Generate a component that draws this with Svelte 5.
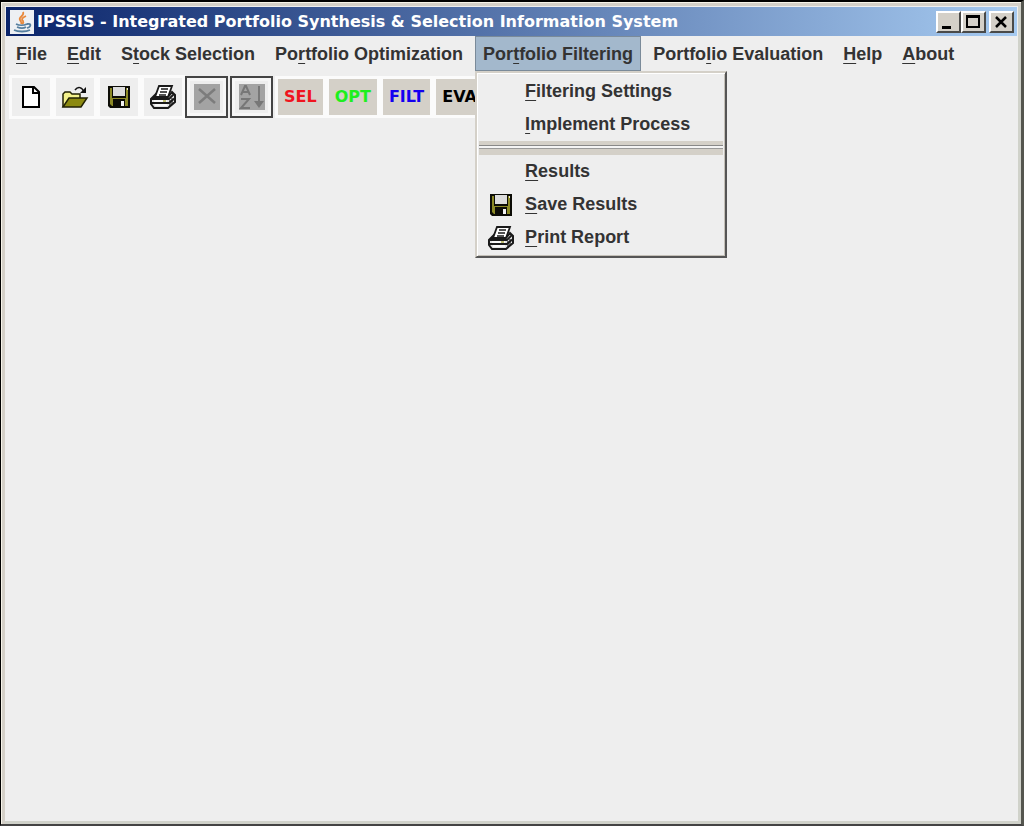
<script lang="ts">
  interface MenuItem {
    label: string;
    key: number; // index of the underlined letter
    icon?: 'save' | 'print';
    divider?: boolean;
  }

  interface Menu {
    label: string;
    key: number;
    items?: MenuItem[];
  }

  const title = 'IPSSIS - Integrated Portfolio Synthesis & Selection Information System';

  const menus: Menu[] = [
    { label: 'File', key: 0 },
    { label: 'Edit', key: 0 },
    { label: 'Stock Selection', key: 1 },
    { label: 'Portfolio Optimization', key: 2 },
    {
      label: 'Portfolio Filtering',
      key: 3,
      items: [
        { label: 'Filtering Settings', key: 0 },
        { label: 'Implement Process', key: 0 },
        { label: 'Results', key: 0, divider: true },
        { label: 'Save Results', key: 0, icon: 'save' },
        { label: 'Print Report', key: 0, icon: 'print' },
      ],
    },
    { label: 'Portfolio Evaluation', key: 6 },
    { label: 'Help', key: 0 },
    { label: 'About', key: 0 },
  ];

  const stages = [
    { label: 'SEL', name: 'red' },
    { label: 'OPT', name: 'green' },
    { label: 'FILT', name: 'blue' },
    { label: 'EVAL', name: 'black' },
  ];

  let openMenu = $state('Portfolio Filtering');

  function toggleMenu(label: string) {
    openMenu = openMenu === label ? '' : label;
  }
</script>

{#snippet mnemonic(label: string, key: number)}
  <span>{label.slice(0, key)}<u>{label[key]}</u>{label.slice(key + 1)}</span>
{/snippet}

{#snippet saveIcon()}
  <svg class="icon" viewBox="0 0 24 24" aria-hidden="true">
    <path d="M1 1h22v22H3l-2-2z" fill="#0c0c06" />
    <path d="M3 3h2v10h14V3h2v18H5l-2-2z" fill="#8c8a26" />
    <path d="M6 2h12v9H6z" fill="#dcdcdc" />
    <path d="M6 14h12v8H6z" fill="#0c0c06" />
    <path d="M14 16h3v5h-3z" fill="#f4f4f4" />
    <path d="M20 3h1v2h-1z" fill="#e8e8e8" />
  </svg>
{/snippet}

{#snippet printIcon()}
  <svg class="icon print" viewBox="0 0 28 24" aria-hidden="true">
    <path d="M10 1h13l-4 11H6z" fill="#fff" stroke="#1a1a1a" stroke-width="1.8" />
    <path d="M12 4h7M11 7h7M10 10h7" stroke="#1a1a1a" stroke-width="1.4" />
    <path d="M6 10l-4 4v5l3 4h14l7-6v-7l-3-3-4 5H6z" fill="#e4e4e4" stroke="#1a1a1a" stroke-width="2" />
    <path d="M3 14h17l5-5M3 18h17l6-5" fill="none" stroke="#1a1a1a" stroke-width="1.8" />
    <path d="M21 15v6M23 13v6" stroke="#1a1a1a" stroke-width="1.2" />
    <path d="M5 16h13M6 20h12" stroke="#fff" stroke-width="1.4" />
    <path d="M14 16h3" stroke="#a6a43c" stroke-width="1.4" />
  </svg>
{/snippet}

<main class="window">
  <header class="titlebar">
    <svg class="java" viewBox="0 0 24 24" aria-hidden="true">
      <path d="M0 0h24v24H0z" fill="#edf0f3" />
      <path d="M13 2c2 4-5 5-3 8 1 2 2 2 1 4M16 6c-4 2-5 3-3 5 1 2 0 2-1 3" fill="none" stroke="#e8893c" stroke-width="1.8" />
      <path d="M6 14c3 1.5 8 1.5 11 0M7 17c3 1.3 7 1.3 9 0M17 14c5-1 4 3 0 4M4 20c4 2 12 2 16 0" fill="none" stroke="#557f9f" stroke-width="1.8" />
    </svg>
    <h1>{title}</h1>
    <div class="controls">
      <button type="button" aria-label="Minimize">
        <svg viewBox="0 0 20 18"><path d="M4 13h9v3H4z" /></svg>
      </button>
      <button type="button" aria-label="Maximize">
        <svg viewBox="0 0 20 18"><path d="M3 2h14v13H3zM5 5v8h10V5z" fill-rule="evenodd" /></svg>
      </button>
      <button type="button" class="close" aria-label="Close">
        <svg viewBox="0 0 20 18"><path d="M5 4l10 10M15 4L5 14" fill="none" stroke="#000" stroke-width="2.5" /></svg>
      </button>
    </div>
  </header>

  <nav class="menubar">
    {#each menus as menu}
      <div class="menu">
        <button
          type="button"
          class="menu-title"
          class:open={openMenu === menu.label}
          aria-expanded={openMenu === menu.label}
          onclick={() => toggleMenu(menu.label)}
        >
          {@render mnemonic(menu.label, menu.key)}
        </button>
        {#if menu.items && openMenu === menu.label}
          <div class="popup">
            {#each menu.items as item}
              {#if item.divider}
                <div class="divider"></div>
              {/if}
              <button type="button" class="menu-item">
                <span class="slot">
                  {#if item.icon === 'save'}
                    {@render saveIcon()}
                  {:else if item.icon === 'print'}
                    {@render printIcon()}
                  {/if}
                </span>
                {@render mnemonic(item.label, item.key)}
              </button>
            {/each}
          </div>
        {/if}
      </div>
    {/each}
  </nav>

  <div class="toolbar">
    <button type="button" class="tool" aria-label="New">
      <svg class="icon" viewBox="0 0 24 24">
        <path d="M4 2h11l5 5v15H4z" fill="#fff" stroke="#000" stroke-width="2" />
        <path d="M14 2v6h6" fill="none" stroke="#000" stroke-width="2" />
      </svg>
    </button>
    <button type="button" class="tool" aria-label="Open">
      <svg class="icon wide" viewBox="0 0 28 24">
        <path d="M2 22V9l2-2h5l2 2h8v4" fill="#f4f28c" stroke="#222204" stroke-width="1.5" />
        <path d="M2 22l6-9h18l-6 9z" fill="#8c8a10" stroke="#222204" stroke-width="1.5" />
        <path d="M14 5c3-4 7-3 9 2" fill="none" stroke="#111" stroke-width="1.5" />
        <path d="M25 2v6h-6z" fill="#111" />
      </svg>
    </button>
    <button type="button" class="tool" aria-label="Save">{@render saveIcon()}</button>
    <button type="button" class="tool" aria-label="Print">{@render printIcon()}</button>
    <button type="button" class="tool off" aria-label="Delete" disabled>
      <svg class="glyph" viewBox="0 0 26 26">
        <path d="M0 0h26v26H0z" fill="#a3a3a3" />
        <path d="M5 5l16 14M21 5L5 19" stroke="#7c7c7c" stroke-width="2.5" />
      </svg>
    </button>
    <button type="button" class="tool off" aria-label="Sort" disabled>
      <svg class="glyph" viewBox="0 0 26 26">
        <path d="M0 0h26v26H0z" fill="#a3a3a3" />
        <path d="M2 11l4-9h1l4 9M4 8h6M2 15h8L2 24h9" fill="none" stroke="#777" stroke-width="2" />
        <path d="M20 2v20" stroke="#777" stroke-width="2" />
        <path d="M15 17h10l-5 7z" fill="#777" />
      </svg>
    </button>
    {#each stages as stage}
      <button type="button" class="stage {stage.name}">{stage.label}</button>
    {/each}
  </div>
</main>

<style>
  :global(body) {
    margin: 0;
    background: #000;
  }

  .window {
    box-sizing: border-box;
    min-height: 100vh;
    padding: 4px 4px 3px 4px;
    border-style: solid;
    border-width: 2px 3px 2px 1px;
    border-color: #000 #55564f #444 #000;
    background: #eee;
    box-shadow: inset 1px 1px #f6f3e9, inset 4px 4px #d4d0c8, inset -3px -3px #d0d2ca;
    font-family: "Liberation Sans", Arial, sans-serif;
  }

  button {
    margin: 0;
    padding: 0;
    border: 0;
    border-radius: 0;
    background: none;
    color: inherit;
    font: inherit;
  }

  svg {
    display: block;
  }

  .titlebar {
    display: flex;
    align-items: center;
    height: 29px;
    padding: 0 3px 0 4px;
    margin: 1px 0 0 1px;
    background: linear-gradient(to right, #0a246a, #a6caf0);
    color: #fff;
  }

  .java {
    width: 24px;
    height: 24px;
  }

  h1 {
    flex: 1;
    margin: 0 0 0 3px;
    font: bold 16px/24px "DejaVu Sans", Tahoma, sans-serif;
    white-space: nowrap;
  }

  .controls {
    display: flex;
  }

  .controls button {
    box-sizing: border-box;
    width: 25px;
    height: 22px;
    border: 2px solid;
    border-color: #fff #4a4a48 #4a4a48 #fff;
    background: #d4d0c8;
  }

  .controls .close {
    margin-left: 3px;
  }

  .controls svg {
    width: 20px;
    height: 18px;
  }

  .menubar {
    display: flex;
    gap: 4px;
    height: 35px;
    padding-left: 3px;
    color: #333;
    font-size: 18px;
    font-weight: bold;
  }

  .menu {
    position: relative;
  }

  .menu-title {
    box-sizing: border-box;
    height: 35px;
    padding: 0 7px;
    border: 1px solid transparent;
    line-height: 32px;
    white-space: nowrap;
  }

  .menu-title.open {
    border-color: #7a8a99;
    background: #a3b8cc;
  }

  u {
    text-decoration-thickness: 1px;
    text-underline-offset: 3px;
    text-decoration-skip-ink: none;
  }

  .popup {
    position: absolute;
    z-index: 1;
    top: 100%;
    left: 0;
    box-sizing: border-box;
    width: 252px;
    padding: 2px;
    border: 2px solid;
    border-color: #d4d0c8 #555 #555 #d4d0c8;
    background: #eee;
    box-shadow: inset 1px 1px #fff, inset -1px -1px #c4c0b8;
  }

  .menu-item {
    display: flex;
    align-items: center;
    width: 100%;
    height: 33px;
    text-align: left;
    white-space: nowrap;
  }

  .slot {
    display: flex;
    justify-content: center;
    width: 44px;
    margin-right: 2px;
  }

  .divider {
    height: 4px;
    border: solid #d4d0c8;
    border-width: 4px 0 6px;
    background: linear-gradient(#888 1px, #f4f4f4 1px 3px, #999 3px);
    background-clip: padding-box;
    background-origin: padding-box;
  }

  .icon {
    width: 24px;
    height: 24px;
  }

  .icon.wide,
  .icon.print {
    width: 28px;
  }

  .toolbar {
    display: flex;
    align-items: center;
    padding: 4px;
  }

  .tool {
    box-sizing: border-box;
    display: flex;
    align-items: center;
    justify-content: center;
    width: 44px;
    height: 44px;
    border: 3px solid #fbfbfb;
    background: #eee;
  }

  .tool.off {
    width: 43px;
    height: 42px;
    margin-right: 2px;
    border: 2px solid #444;
    box-shadow: inset 0 0 0 3px #f6f6f6;
  }

  .glyph {
    width: 26px;
    height: 26px;
  }

  .stage {
    box-sizing: border-box;
    height: 42px;
    padding: 0 6px;
    border: 3px solid #fbfbfb;
    background: #d4d0c8;
    font: bold 16px/24px "DejaVu Sans", Tahoma, sans-serif;
  }

  .red {
    color: #f0141e;
  }

  .green {
    color: #1eef1e;
  }

  .blue {
    color: #1400f0;
  }

  .black {
    color: #000;
  }
</style>
